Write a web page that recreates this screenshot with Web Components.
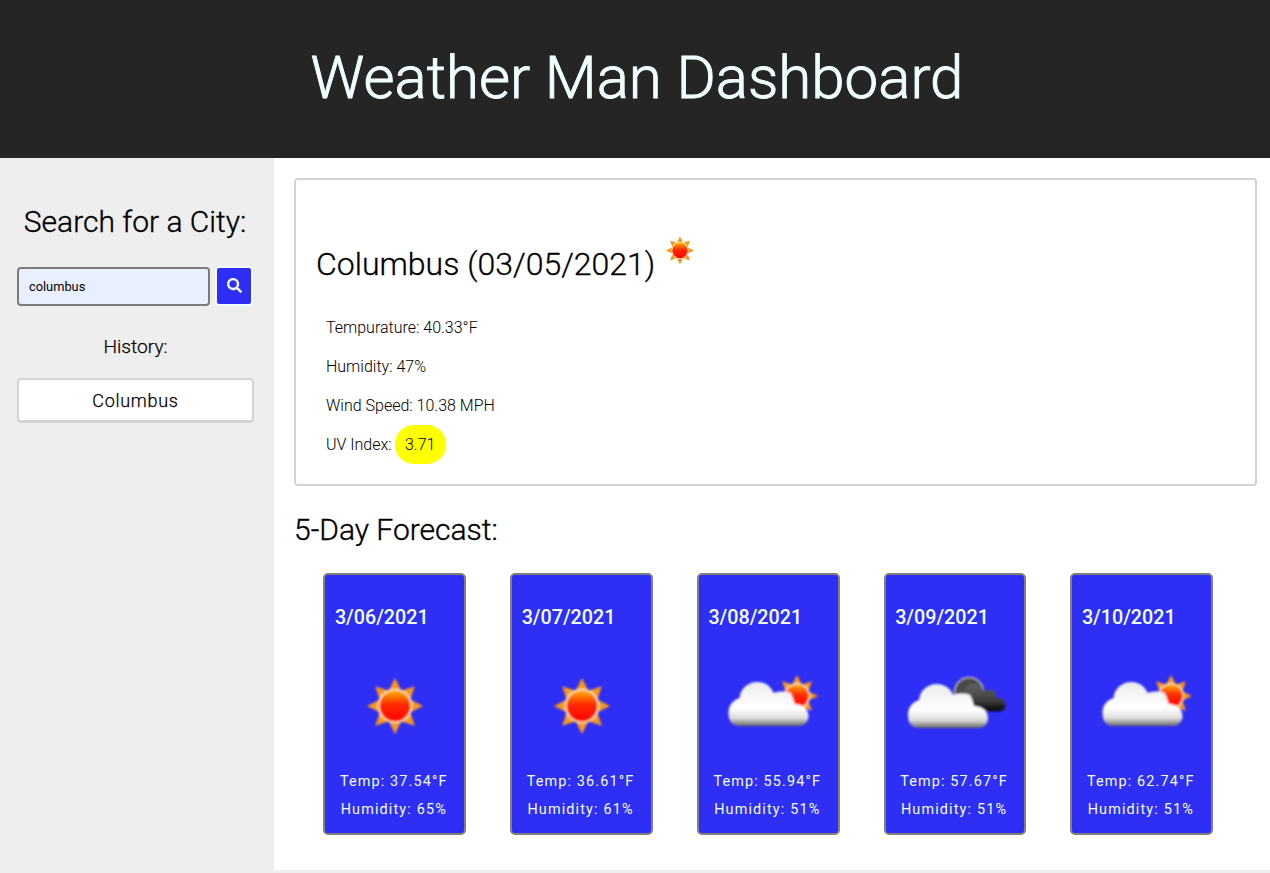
<!DOCTYPE html>
<html lang="en">
<head>
<meta charset="utf-8">
<title>Weather Man Dashboard</title>
<style>
  html, body { margin: 0; padding: 0; background: #eee; font-family: Roboto, "Liberation Sans", sans-serif; overflow: hidden; }
</style>
</head>
<body>
<wx-app></wx-app>
<script>
/* wx-icon: drawn versions of the three weather pictures, on a 100x100 box */
const sunPart = (cx, cy, r, id) => {
  const spikes = [0, 45, 90, 135, 180, 225, 270, 315].map((a) =>
    `<polygon points="${cx - r * 0.22},${cy - r * 0.56} ${cx},${cy - r} ${cx + r * 0.22},${cy - r * 0.56}" fill="#f7981d" transform="rotate(${a} ${cx} ${cy})"/>`
  ).join("");
  return `${spikes}
    <circle cx="${cx}" cy="${cy}" r="${r * 0.62}" fill="#ffe2b0"/>
    <circle cx="${cx}" cy="${cy}" r="${r * 0.55}" fill="url(#${id})"/>`;
};

const cloudPath = (x, y, s) => {
  // x,y = top left, s = scale; shape is 80 wide and 44 high at s=1
  const p = (a, b) => `${x + a * s} ${y + b * s}`;
  return `M${p(11, 44)} C${p(3, 44)} ${p(0, 38)} ${p(0, 31)} C${p(0, 23)} ${p(5, 18)} ${p(11, 16)}
    C${p(12, 6)} ${p(20, 0)} ${p(29, 0)} C${p(37, 0)} ${p(43, 5)} ${p(45, 11)}
    C${p(50, 9)} ${p(58, 9)} ${p(62, 11)} C${p(64, 14)} ${p(65, 18)} ${p(66, 22)}
    C${p(74, 22)} ${p(80, 27)} ${p(80, 34)} C${p(80, 40)} ${p(76, 44)} ${p(70, 44)} Z`;
};

const ICONS = {
  sun: () => sunPart(50, 51, 28, "s"),
  "cloud-sun": () => `${sunPart(79, 41, 21, "s")}
    <path d="${cloudPath(10.5, 27, 1)}" fill="url(#w)"/>`,
  "cloud-night": () => `
    <circle cx="64" cy="37" r="14.5" fill="#4a4a4a" stroke="#b5b5b5" stroke-width="1.5"/>
    <path d="${cloudPath(51, 29, 0.62)}" fill="url(#d)"/>
    <path d="${cloudPath(3, 29, 1)}" fill="url(#w)"/>`,
};

class WxIcon extends HTMLElement {
  constructor() {
    super();
    this.attachShadow({ mode: "open" });
  }

  connectedCallback() {
    const size = this.getAttribute("size") || 100;
    const draw = ICONS[this.getAttribute("kind")] || ICONS.sun;
    this.shadowRoot.innerHTML = `
<style>
:host { display: inline-block; width: ${size}px; height: ${size}px; }
svg { display: block; width: 100%; height: 100%; overflow: visible; }
</style>
<svg viewBox="0 0 100 100" role="img" aria-label="weather icon">
  <defs>
    <linearGradient id="s" x1="0" y1="0" x2="0" y2="1">
      <stop offset="0" stop-color="#ffb000"/>
      <stop offset="0.45" stop-color="#ff2a00"/>
      <stop offset="1" stop-color="#ff0000"/>
    </linearGradient>
    <linearGradient id="w" x1="0" y1="0" x2="0" y2="1">
      <stop offset="0" stop-color="#ececec"/>
      <stop offset="0.6" stop-color="#ffffff"/>
      <stop offset="0.82" stop-color="#dcdcdc"/>
      <stop offset="1" stop-color="#666"/>
    </linearGradient>
    <linearGradient id="d" x1="0" y1="0" x2="0" y2="1">
      <stop offset="0" stop-color="#626262"/>
      <stop offset="0.6" stop-color="#3f3f3f"/>
      <stop offset="1" stop-color="#050505"/>
    </linearGradient>
    <filter id="b" x="-10%" y="-10%" width="120%" height="120%"><feGaussianBlur stdDeviation="0.8"/></filter>
  </defs>
  <g filter="url(#b)">${draw()}</g>
</svg>`;
  }
}
customElements.define("wx-icon", WxIcon);

class WxHeader extends HTMLElement {
  constructor() {
    super();
    this.attachShadow({ mode: "open" });
    this.shadowRoot.innerHTML = `
<style>
:host { display: flex; box-sizing: border-box; height: 158px; padding: 0 0 4px 4px; align-items: center; justify-content: center; background: #252525; }
h1 { margin: 0; font: 300 60px Roboto, sans-serif; color: #f0ffff; -webkit-text-stroke: 0.9px #f0ffff; }
</style>
<h1><slot></slot></h1>`;
  }
}
customElements.define("wx-header", WxHeader);

class WxSidebar extends HTMLElement {
  constructor() {
    super();
    this.attachShadow({ mode: "open" });
    this.shadowRoot.innerHTML = `
<style>
:host { display: block; box-sizing: border-box; width: 274px; padding: 45px 20px 0 17px; background: #eee; color: #000; text-align: center; }
h2 { margin: 0 -16px 25px -17px; font: 300 30px/38px Roboto, sans-serif; -webkit-text-stroke: 0.35px #000; }
form { display: flex; gap: 5px; align-items: flex-start; }
input {
  box-sizing: border-box; width: 193px; height: 39px; margin-top: 1px; padding: 0 10px;
  border: 2px solid #7c7c7c; border-radius: 4px; background: #e8f0fe;
  font: 400 12.8px Roboto, sans-serif; color: #000; outline: none;
}
.go {
  box-sizing: border-box; width: 38px; height: 40px; padding: 0;
  border: 2px solid #f0ffff; border-radius: 4px; background: #2e2ef5;
  display: flex; align-items: center; justify-content: center;
}
.go svg { width: 15px; height: 15px; fill: #f0ffff; display: block; margin-top: -1px; }
h3 { margin: 29px 0 19px; font: 300 19.2px/24px Roboto, sans-serif; -webkit-text-stroke: 0.25px #000; }
.hist {
  display: block; box-sizing: border-box; width: 237px; height: 45px; padding: 0;
  border: 2px solid #d3d3d3; border-bottom-width: 3px; border-radius: 4px; background: #fff;
  font: 300 18px Roboto, sans-serif; letter-spacing: 0.7px; color: #000; -webkit-text-stroke: 0.25px #000;
}
</style>
<h2>Search for a City:</h2>
<form onsubmit="return false">
  <input type="text" value="columbus" aria-label="City">
  <button class="go" aria-label="Search">
    <svg viewBox="0 0 512 512"><path d="M505 442.7L405.3 343c-4.5-4.5-10.6-7-17-7H372c27.6-35.3 44-79.7 44-128C416 93.1 322.9 0 208 0S0 93.1 0 208s93.1 208 208 208c48.3 0 92.7-16.4 128-44v16.3c0 6.4 2.5 12.5 7 17l99.7 99.7c9.4 9.4 24.6 9.4 33.9 0l28.3-28.3c9.4-9.4 9.4-24.6.1-34zM208 336c-70.7 0-128-57.2-128-128 0-70.7 57.2-128 128-128 70.7 0 128 57.2 128 128 0 70.7-57.2 128-128 128z"/></svg>
  </button>
</form>
<h3>History:</h3>
<button class="hist">Columbus</button>`;
  }
}
customElements.define("wx-sidebar", WxSidebar);

class WxCurrent extends HTMLElement {
  constructor() {
    super();
    this.attachShadow({ mode: "open" });
    this.shadowRoot.innerHTML = `
<style>
:host { display: block; box-sizing: border-box; height: 308px; padding: 45px 20px 0; border: 2px solid #d3d3d3; border-radius: 4px; background: #fff; color: #000; }
h2 { margin: 0 0 18px; font: 300 32px/52px Roboto, sans-serif; -webkit-text-stroke: 0.3px #000; }
wx-icon { vertical-align: baseline; }
.row { display: flex; align-items: center; height: 39px; padding-left: 10px; font: 300 16px Roboto, sans-serif; }
.uv { display: flex; align-items: center; justify-content: center; box-sizing: border-box; width: 51px; height: 39px; margin-left: 3px; border-radius: 19px; background: #ff0; }
</style>
<h2>Columbus (03/05/2021)<wx-icon kind="sun" size="50"></wx-icon></h2>
<div class="row">Tempurature: 40.33°F</div>
<div class="row">Humidity: 47%</div>
<div class="row">Wind Speed: 10.38 MPH</div>
<div class="row">UV Index: <span class="uv">3.71</span></div>`;
  }
}
customElements.define("wx-current", WxCurrent);

class WxDay extends HTMLElement {
  constructor() {
    super();
    this.attachShadow({ mode: "open" });
    const { date, temp, hum, kind } = this.dataset;
    this.shadowRoot.innerHTML = `
<style>
:host { display: block; box-sizing: border-box; width: 142.75px; height: 262px; border: 2px solid #808080; border-radius: 5px; background: #2e2ef5; color: #f0ffff; }
h4 { margin: 0; padding: 31px 0 0 9.5px; font: 500 19.7px/24px Roboto, sans-serif; }
.pic { display: flex; justify-content: center; margin-top: 25px; }
p { margin: 0; padding-right: 2px; text-align: center; font: 400 14.4px/28px Roboto, sans-serif; letter-spacing: 1.15px; }
.temp { margin-top: 13px; }
</style>
<h4>${date}</h4>
<div class="pic"><wx-icon kind="${kind}" size="100"></wx-icon></div>
<p class="temp">Temp: ${temp}°F</p>
<p>Humidity: ${hum}%</p>`;
  }
}

class WxForecast extends HTMLElement {
  constructor() {
    super();
    this.attachShadow({ mode: "open" });
    this.shadowRoot.innerHTML = `
<style>
:host { display: block; color: #000; }
h2 { margin: 0; padding-top: 24px; font: 300 30px/40px Roboto, sans-serif; -webkit-text-stroke: 0.35px #000; }
.days { display: flex; gap: 44px; margin-top: 23px; padding-left: 29.4px; }
</style>
<h2>5-Day Forecast:</h2>
<div class="days"><slot></slot></div>`;
  }
}

class WxApp extends HTMLElement {
  constructor() {
    super();
    this.attachShadow({ mode: "open" });
    const days = [
      ["3/06/2021", "37.54", 65, "sun"],
      ["3/07/2021", "36.61", 61, "sun"],
      ["3/08/2021", "55.94", 51, "cloud-sun"],
      ["3/09/2021", "57.67", 51, "cloud-night"],
      ["3/10/2021", "62.74", 51, "cloud-sun"],
    ].map(([d, t, h, k]) =>
      `<wx-day data-date="${d}" data-temp="${t}" data-hum="${h}" data-kind="${k}"></wx-day>`
    ).join("");
    this.shadowRoot.innerHTML = `
<style>
:host { display: block; width: 1270px; }
.body { display: flex; height: 712px; }
main { flex: 1; box-sizing: border-box; padding: 20px 13px 0 20px; background: #fff; }
</style>
<wx-header>Weather Man Dashboard</wx-header>
<div class="body">
  <wx-sidebar></wx-sidebar>
  <main>
    <wx-current></wx-current>
    <wx-forecast>${days}</wx-forecast>
  </main>
</div>`;
  }
}

customElements.define("wx-day", WxDay);
customElements.define("wx-forecast", WxForecast);
customElements.define("wx-app", WxApp);
</script>
</body>
</html>
